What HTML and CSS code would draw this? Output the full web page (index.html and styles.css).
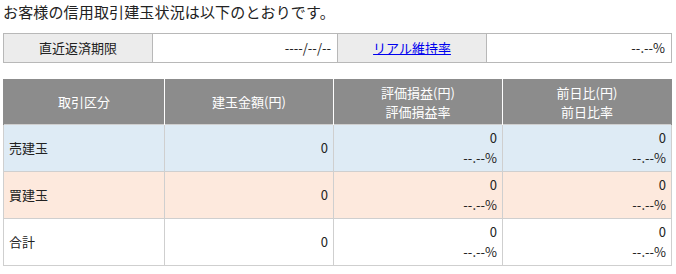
FILE: index.html
```html
<!DOCTYPE html>
<html lang="ja">
<head>
<meta charset="utf-8">
<link rel="stylesheet" href="styles.css">
</head>
<body>
<div class="page">
  <p class="lead">お客様の信用取引建玉状況は以下のとおりです。</p>
  <table class="summary">
    <colgroup>
      <col class="c-narrow"><col class="c-wide"><col class="c-narrow"><col class="c-wide">
    </colgroup>
    <tr>
      <th>直近返済期限</th>
      <td>----/--/--</td>
      <th><a href="#">リアル維持率</a></th>
      <td>--.--%</td>
    </tr>
  </table>
  <table class="positions">
    <colgroup>
      <col class="p-first"><col class="p-col"><col class="p-col"><col class="p-col">
    </colgroup>
    <thead>
      <tr>
        <th>取引区分</th>
        <th>建玉金額(円)</th>
        <th>評価損益(円)<br>評価損益率</th>
        <th>前日比(円)<br>前日比率</th>
      </tr>
    </thead>
    <tbody>
      <tr class="sell">
        <td class="label">売建玉</td>
        <td>0</td>
        <td>0<br>--.--%</td>
        <td>0<br>--.--%</td>
      </tr>
      <tr class="buy">
        <td class="label">買建玉</td>
        <td>0</td>
        <td>0<br>--.--%</td>
        <td>0<br>--.--%</td>
      </tr>
      <tr class="total">
        <td class="label">合計</td>
        <td>0</td>
        <td>0<br>--.--%</td>
        <td>0<br>--.--%</td>
      </tr>
    </tbody>
  </table>
</div>
</body>
</html>
```
FILE: styles.css
```css
html, body {
  margin: 0;
  padding: 0;
  background: #fff;
}
body {
  font-family: "Noto Sans CJK JP", "Noto Sans", sans-serif;
  color: #222;
}
.page {
  padding: 0 5px 0 3px;
}
.lead {
  margin: 0;
  font-size: 15px;
  line-height: 24px;
  letter-spacing: 0.15px;
}
table {
  width: 668px;
  border-collapse: collapse;
  table-layout: fixed;
  font-size: 13px;
}
.summary {
  margin-top: 9px;
}
.c-narrow { width: 149px; }
.c-wide { width: 185px; }
.summary th, .summary td {
  border: 1px solid #b8b8b8;
  height: 28px;
  padding: 0 6px;
  line-height: 18px;
  font-weight: normal;
}
.summary th {
  background: #ececec;
  text-align: center;
}
.summary td {
  text-align: right;
  background: #fff;
}
.summary a {
  color: #0000ee;
  text-decoration: underline;
}
.positions {
  margin-top: 16px;
}
.p-first { width: 161px; }
.p-col { width: 169px; }
.positions th {
  background: #8c8c8c;
  color: #fff;
  font-weight: normal;
  height: 45px;
  padding: 0 6px;
  line-height: 19px;
  text-align: center;
  border-left: 1px solid #fff;
  border-right: 1px solid #fff;
}
.positions th:first-child { border-left: 1px solid #8c8c8c; }
.positions th:last-child { border-right: 1px solid #8c8c8c; }
.positions td {
  border: 1px solid #cfcfcf;
  height: 46px;
  padding: 0 5px;
  line-height: 20px;
  text-align: right;
}
.positions td.label {
  text-align: left;
}
.sell td { background: #deebf5; }
.buy td { background: #fde9dd; }
.total td { background: #fff; }
```
